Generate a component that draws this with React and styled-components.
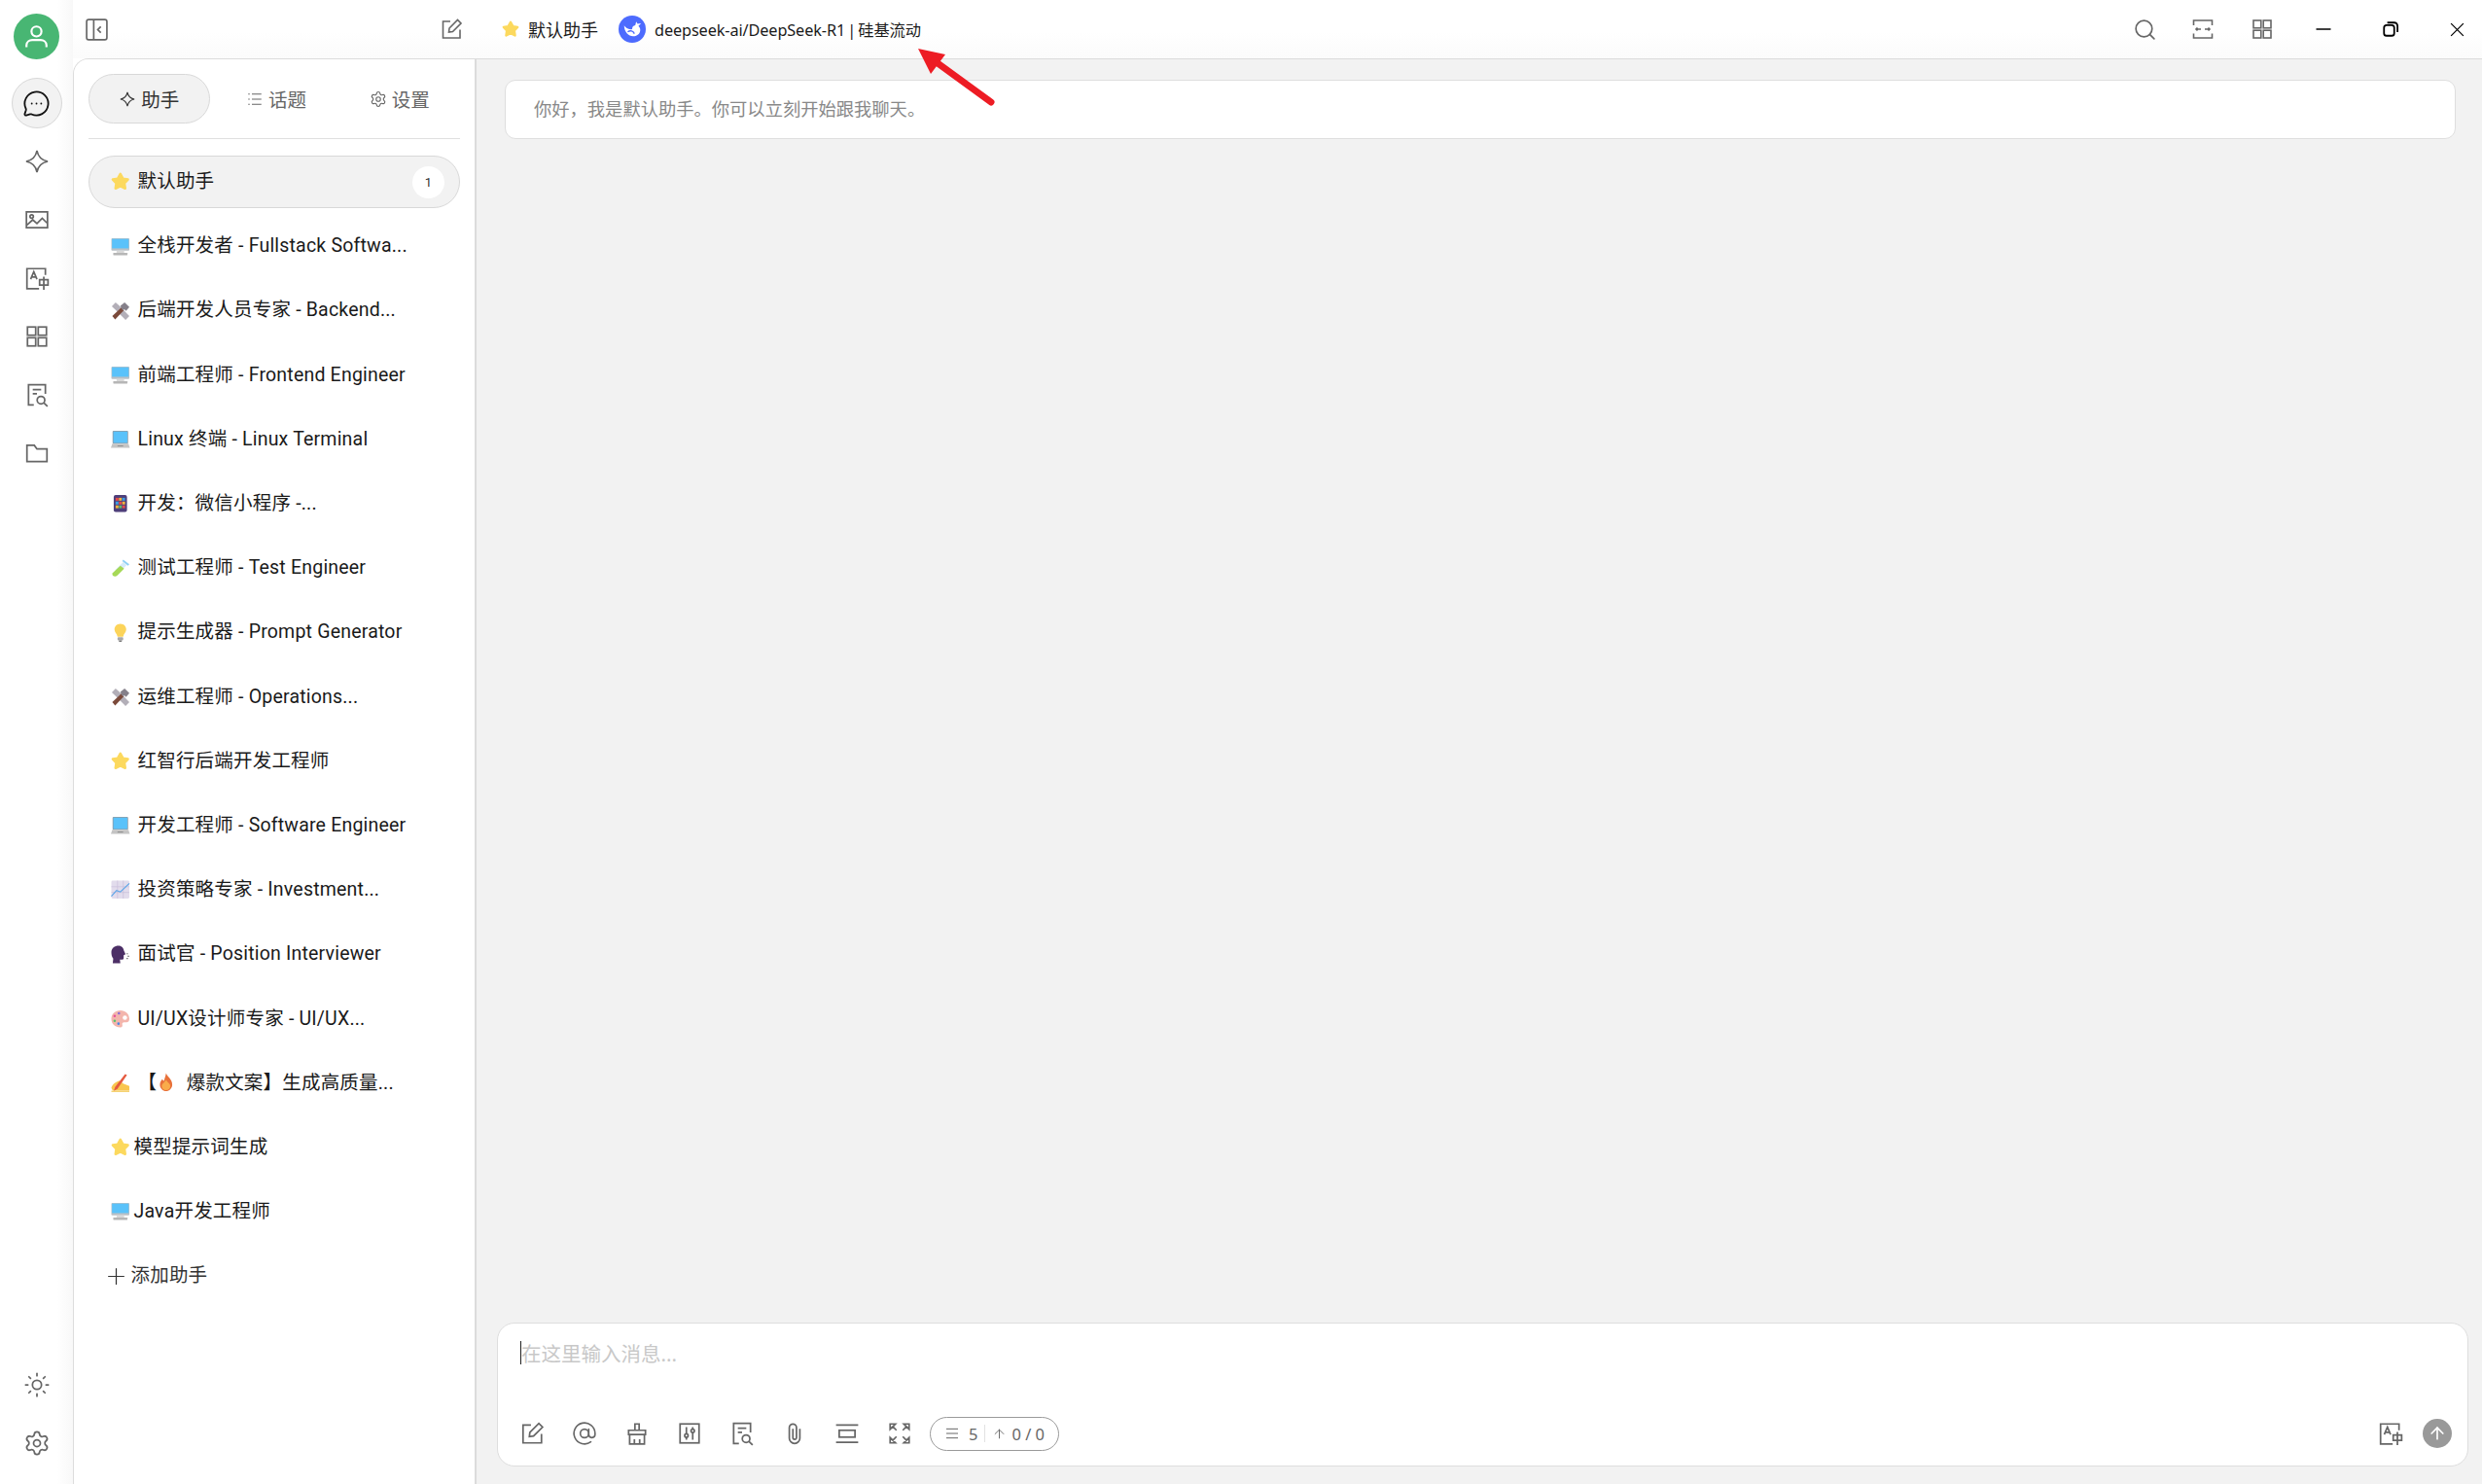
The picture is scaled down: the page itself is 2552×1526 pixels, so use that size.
import styled, { createGlobalStyle } from "styled-components"
import { ArrowUp, AtSign, MessageCircleMore, Plus, Search, Settings, Sun } from "lucide-react"

const GlobalStyle = createGlobalStyle`
    html, body {
        margin: 0;
        height: 100%;
        background: #fff;
        overflow: hidden;
    }
    body {
        font-family: "Noto Sans", "Noto Sans CJK SC", sans-serif;
        color: #1a1a1a;
    }
    * {
        box-sizing: border-box;
    }
`

const Layout = styled.div`
    display: flex;
    height: 100vh;
    position: relative;
`
const Sidebar = styled.aside`
    width: 75px;
    flex-shrink: 0;
    display: flex;
    flex-direction: column;
    align-items: center;
    padding: 14px 0 16px;
    background: linear-gradient(90deg, #fff 78%, #f8f8f8);
`
const Avatar = styled.div`
    width: 47px;
    height: 47px;
    border-radius: 50%;
    background: #48b673;
    color: #fff;
    display: flex;
    align-items: center;
    justify-content: center;
    margin-bottom: 19px;
`
const SideGroup = styled.div`
    display: flex;
    flex-direction: column;
    align-items: center;
    gap: 8px;
    &:last-child {
        margin-top: auto;
    }
`
const SideButton = styled.div`
    width: 52px;
    height: 52px;
    border-radius: 50%;
    display: flex;
    align-items: center;
    justify-content: center;
    color: ${(p) => (p.$active ? "#111" : "#666")};
    background: ${(p) => (p.$active ? "#f2f2f2" : "transparent")};
    border: 1.5px solid ${(p) => (p.$active ? "#d8d8d8" : "transparent")};
`
const Column = styled.div`
    flex: 1;
    min-width: 0;
    display: flex;
    flex-direction: column;
`
const Navbar = styled.header`
    height: 60px;
    flex-shrink: 0;
    display: flex;
    align-items: center;
    background: linear-gradient(#fff 55%, #fbfbfb);
`
const NavLeft = styled.div`
    width: 414px;
    flex-shrink: 0;
    display: flex;
    align-items: center;
    justify-content: space-between;
    padding: 0 13px 0 12px;
    color: #666;
`
const NavTitle = styled.div`
    display: flex;
    align-items: center;
    gap: 9px;
    font-size: 18px;
    padding-left: 27px;
`
const ModelName = styled.span`
    margin-left: 12px;
    font-size: 16.25px;
    letter-spacing: -0.1px;
    word-spacing: -2px;
    display: flex;
    align-items: center;
    gap: 9px;
`
const ModelLogo = styled.span`
    width: 28px;
    height: 28px;
    border-radius: 50%;
    background: #4d6bfe;
    display: flex;
    align-items: center;
    justify-content: center;
`
const NavRight = styled.div`
    margin-left: auto;
    display: flex;
    align-items: center;
    height: 100%;
`
const NavIcon = styled.div`
    width: ${(p) => p.$w || 60}px;
    height: 100%;
    padding-left: ${(p) => p.$pad || 0}px;
    display: flex;
    align-items: center;
    justify-content: center;
    color: #666;
`
const WinButton = styled.div`
    width: 69px;
    height: 100%;
    display: flex;
    align-items: center;
    justify-content: center;
    color: #000;
    &:last-child {
        width: 60px;
        justify-content: flex-end;
        padding-right: 17px;
    }
`
const Body = styled.div`
    flex: 1;
    min-height: 0;
    display: flex;
    border-top: 1.5px solid #dcdcdc;
    border-left: 1.5px solid #dcdcdc;
    border-top-left-radius: 16px;
    overflow: hidden;
    background: #f2f2f2;
`
const Panel = styled.section`
    width: 414px;
    flex-shrink: 0;
    background: #fff;
    border-right: 2px solid #dcdcdc;
    padding: 15px 15px 0 15px;
    font-family: Roboto, "Noto Sans CJK SC", sans-serif;
`
const Tabs = styled.div`
    display: flex;
    gap: 2px;
    padding-bottom: 15px;
    border-bottom: 1.5px solid #e0e0e0;
    margin-bottom: 17px;
`
const Tab = styled.div`
    width: 125px;
    height: 51px;
    border-radius: 26px;
    display: flex;
    align-items: center;
    justify-content: center;
    gap: 5px;
    font-size: 19.5px;
    color: ${(p) => (p.$active ? "#333" : "#666")};
    background: ${(p) => (p.$active ? "#f2f2f2" : "transparent")};
    border: 1.5px solid ${(p) => (p.$active ? "#d8d8d8" : "transparent")};
    margin-right: ${(p) => (p.$active ? 4 : 0)}px;
`
const List = styled.div`
    display: flex;
    flex-direction: column;
    gap: 12px;
`
const Row = styled.div`
    height: 54.2px;
    border-radius: 27px;
    display: flex;
    align-items: center;
    gap: ${(p) => (p.$tight ? 4 : 8)}px;
    padding: 0 15px 0 22px;
    font-size: 19.5px;
    letter-spacing: 0.2px;
    white-space: nowrap;
    background: ${(p) => (p.$active ? "#f2f2f2" : "transparent")};
    border: 1.5px solid ${(p) => (p.$active ? "#d8d8d8" : "transparent")};
`
const AddRow = styled(Row)`
    padding-left: 14px;
    gap: 1.5px;
    color: #333;
`
const Label = styled.span`
    margin-bottom: 5px;
`
const Badge = styled.span`
    margin-left: auto;
    width: 33px;
    height: 33px;
    border-radius: 50%;
    background: #fff;
    display: flex;
    align-items: center;
    justify-content: center;
    font-size: 13px;
    color: #333;
`
const Main = styled.main`
    flex: 1;
    min-width: 0;
    display: flex;
    flex-direction: column;
    justify-content: space-between;
    padding: 21px 14px 18px 21px;
`
const Greeting = styled.div`
    height: 61px;
    margin: 0 13px 0 8px;
    padding: 0 29px 3px;
    display: flex;
    align-items: center;
    background: #fff;
    border: 1.5px solid #dedede;
    border-radius: 11px;
    font-size: 18.3px;
    color: #888;
`
const InputBox = styled.div`
    height: 148px;
    display: flex;
    flex-direction: column;
    padding: 18px 16px 15px 8px;
    background: #fff;
    border: 1.5px solid #dedede;
    border-radius: 18px;
`
const Placeholder = styled.div`
    height: 24px;
    margin-left: 15px;
    display: flex;
    align-items: center;
    border-left: 1px solid #222;
    font-size: 20.5px;
    color: #c8c8c8;
`
const Toolbar = styled.div`
    margin-top: auto;
    height: 36px;
    display: flex;
    align-items: center;
`
const ToolButton = styled.div`
    width: 54px;
    height: 36px;
    display: flex;
    align-items: center;
    justify-content: center;
    color: #666;
`
const Counter = styled.div`
    margin-left: 4px;
    width: 133px;
    height: 35px;
    border: 1.5px solid #9a9a9a;
    border-radius: 18px;
    display: flex;
    align-items: center;
    padding-left: 14px;
    font-size: 16.5px;
    color: #666;
`
const CounterPart = styled.span`
    display: flex;
    align-items: center;
    gap: ${(p) => p.$gap}px;
`
const CounterLine = styled.i`
    width: 1px;
    height: 18px;
    background: #e2e2e2;
    margin: 0 7px;
`
const ToolRight = styled.div`
    margin-left: auto;
    display: flex;
    align-items: center;
    gap: 20px;
    color: #666;
`
const SendButton = styled.div`
    width: 30px;
    height: 30px;
    border-radius: 50%;
    background: #999;
    color: #fff;
    display: flex;
    align-items: center;
    justify-content: center;
`
const Annotation = styled.svg`
    position: absolute;
    left: 940px;
    top: 46px;
    width: 85px;
    height: 65px;
`
const Glyph = styled.svg.attrs({ viewBox: "0 0 24 24", fill: "none", stroke: "currentColor" })`
    display: block;
    flex-shrink: 0;
    width: ${(p) => p.$size || 24}px;
    height: ${(p) => p.$size || 24}px;
    stroke-width: ${(p) => p.$weight || 1.6};
`
const EmojiBox = styled.svg.attrs({ viewBox: "0 0 20 20" })`
    display: inline-block;
    flex-shrink: 0;
    width: ${(p) => p.$size || 19.5}px;
    height: ${(p) => p.$size || 19.5}px;
    vertical-align: -3px;
    margin: ${(p) => p.$margin || 0};
`

const icons = {
    sparkle: <path d="M12 2.5C13 8 16 11 21.5 12C16 13 13 16 12 21.5C11 16 8 13 2.5 12C8 11 11 8 12 2.5Z" />,
    image: (
        <>
            <rect x="2" y="4.5" width="20" height="15" />
            <circle cx="7" cy="8.8" r="1.6" />
            <path d="M2.5 17L8 12L12 15.5L17 10.5L21.5 15" />
        </>
    ),
    translate: <path d="M20 9V3H2.5V22H14M6 13L9 6L12 13M7 11H11M14.5 13.5H22.5V18.5H14.5ZM18.5 10.5V23" />,
    grid: (
        <>
            <rect x="3" y="3" width="7.8" height="7.8" />
            <rect x="13.2" y="3" width="7.8" height="7.8" />
            <rect x="3" y="13.2" width="7.8" height="7.8" />
            <rect x="13.2" y="13.2" width="7.8" height="7.8" />
        </>
    ),
    docSearch: (
        <>
            <path d="M20 11V2.5H4V21.5H9M8 7H16M8 11H12" />
            <circle cx="15.8" cy="17" r="3.6" />
            <path d="M18.4 19.6L22 23" />
        </>
    ),
    folder: <path d="M2.5 4.5H9.5L12 8H21.5V20H2.5Z" />,
    edit: <path d="M11 4H3.5V21H21V12.5M9.5 15L10 11L18.5 2.5L22 6L13.5 14.5Z" />,
    collapse: (
        <>
            <rect x="2" y="2" width="20" height="20" rx="2" />
            <path d="M9 2V22M16 9L13 12L16 15" />
        </>
    ),
    brush: <path d="M10 9V3H14V9M4 9H20V13H4ZM5 13V22H19V13M9.5 22V17.5M14.5 22V17.5" />,
    sliders: (
        <>
            <rect x="3" y="3" width="18" height="18" />
            <path d="M9 6V18M15 6V18" />
            <circle cx="9" cy="14" r="1.6" fill="#fff" />
            <circle cx="15" cy="9.5" r="1.6" fill="#fff" />
        </>
    ),
    clip: <path d="M17 7.5V16.5A5 5 0 0 1 7 16.5V6.5A3.4 3.4 0 0 1 13.8 6.5V16A1.7 1.7 0 0 1 10.4 16V7.5" />,
    rows: (
        <>
            <path d="M1.5 4H22.5M1.5 20.5H22.5" />
            <rect x="4.5" y="9" width="15" height="6.5" />
        </>
    ),
    fullscreen: <path d="M3 3H8L3 8ZM21 3H16L21 8ZM3 21H8L3 16ZM21 21H16L21 16ZM5 5L9 9M19 5L15 9M5 19L9 15M19 19L15 15" />,
    expand: <path d="M2.5 8V3H21.5V8M2.5 16.5V21H21.5V16.5M5 12H10M6.5 10.5L5 12L6.5 13.5M14 12H19M17.5 10.5L19 12L17.5 13.5" />,
    minimize: <path d="M2 12H22" />,
    restore: (
        <>
            <rect x="3" y="6.5" width="14" height="14.5" rx="3.5" />
            <path d="M7.5 3H17A4.5 4.5 0 0 1 21.5 7.5V16" />
        </>
    ),
    close: <path d="M3 3L21 21M21 3L3 21" />,
    menu: <path d="M3 5H21M3 12H21M3 19H21" />,
    list: <path d="M3 5H5M8 5H21M3 12H5M8 12H21M3 19H5M8 19H21" />,
    user: <path d="M12 3.5A4.2 4.2 0 1 1 12 12A4.2 4.2 0 1 1 12 3.5ZM3.5 21V19.5C3.5 16.5 6 15 8.5 15H15.5C18 15 20.5 16.5 20.5 19.5V21" />,
}

function Icon({ name, size, weight }) {
    return <Glyph $size={size} $weight={weight}>{icons[name]}</Glyph>
}

const emoji = {
    star: <path d="M10 2L12.7 6.8L18 7.7L14.3 11.6L15.1 17.2L10 14.7L4.9 17.2L5.7 11.6L2 7.7L7.3 6.8Z" fill="#fcd95e" stroke="#fcd95e" strokeWidth="2.6" strokeLinejoin="round" />,
    desktop: (
        <>
            <rect x="0.5" y="1" width="19" height="13" rx="1" fill="#b9c0c6" />
            <rect x="1.2" y="1.7" width="17.6" height="10" fill="#5ac2fa" />
            <rect x="6" y="14" width="8" height="2.5" fill="#d8d8d8" />
            <rect x="2.5" y="16.5" width="15" height="2.5" rx="0.5" fill="#b6b6b6" />
        </>
    ),
    laptop: (
        <>
            <rect x="1.8" y="1" width="16.4" height="13.5" rx="1" fill="#8f9aa3" />
            <rect x="2.6" y="1.8" width="14.8" height="12" fill="#5ac2fa" />
            <path d="M1.5 14.5H18.5L20 19H0Z" fill="#c4c4c4" />
            <rect x="7" y="16.5" width="6" height="1" fill="#8e8e8e" />
        </>
    ),
    tools: (
        <>
            <path d="M1 5L5 1L8.5 4L19.5 15.5L15.5 19.5L4.5 8.5Z" fill="#b3afb8" />
            <path d="M1.5 15.5L11 6.5L13.5 9.5L4.5 19Z" fill="#7b4a3a" />
            <path d="M10 4.500L14.500 1L19.500 6L16 10L14.500 8.500L12 9Z" fill="#85808a" />
        </>
    ),
    tablet: (
        <>
            <rect x="3" y="1" width="14" height="18" rx="2" fill="#4e3f7a" />
            <rect x="5" y="4" width="3" height="3" fill="#e64a4a" />
            <rect x="8.5" y="4" width="3" height="3" fill="#f4b63a" />
            <rect x="12" y="4" width="3" height="3" fill="#3aa0e6" />
            <rect x="5" y="8" width="3" height="3" fill="#3aa0e6" />
            <rect x="8.5" y="8" width="3" height="3" fill="#e64a4a" />
            <rect x="12" y="8" width="3" height="3" fill="#f4b63a" />
            <rect x="5" y="12" width="3" height="3" fill="#f4b63a" />
            <rect x="8.5" y="12" width="3" height="3" fill="#5cc06a" />
            <rect x="12" y="12" width="3" height="3" fill="#e64a4a" />
        </>
    ),
    tube: (
        <>
            <path d="M13 4L16.5 7.5L8 16L4.5 12.5Z" fill="#d6ecfa" />
            <path d="M10 8L14 11L6.5 18.5C5 20 1 19.5 1.5 16Z" fill="#a6d957" />
            <path d="M13 1.5L19.5 6.5L18 8L12 3Z" fill="#8fd0f5" />
        </>
    ),
    bulb: (
        <>
            <path d="M10 0.5C6 0.5 3.8 3.5 3.8 6.5C3.8 9.5 6.5 11 7 14H13C13.5 11 16.2 9.5 16.2 6.5C16.2 3.5 14 0.5 10 0.5Z" fill="#fcd45a" />
            <rect x="7" y="14.5" width="6" height="3.5" rx="1" fill="#a9a9a9" />
            <rect x="8.5" y="18" width="3" height="1.5" fill="#777" />
        </>
    ),
    chart: (
        <>
            <rect x="0.5" y="0.5" width="19" height="19" rx="1.5" fill="#e2dcec" />
            <path d="M7 0.5V19.5M13 0.5V19.5M0.5 7H19.5M0.5 13H19.5" stroke="#c8bed8" strokeWidth="0.7" />
            <path d="M0.5 17L6 11L10 12.5L19.5 3.5" fill="none" stroke="#5aa5e8" strokeWidth="1.2" />
        </>
    ),
    speak: (
        <>
            <path d="M0.5 7.5C0.5 3 4 0.5 8 0.5C11.5 0.5 13.5 3 13.8 6L15.5 9.5L13.5 10.5L13.5 13.5C13.5 15 12 15.5 9.5 15L10 19H2L2.5 14C1 12.5 0.5 10 0.5 7.5Z" fill="#4c2f66" />
            <path d="M16.5 9H18M17.5 11.5H19.5M16.5 14H18" stroke="#777" strokeWidth="1.2" />
        </>
    ),
    palette: (
        <>
            <path d="M10 1C4.5 1 0.5 5 0.5 10C0.5 15 4.5 19 10 19C12 19 12.5 17.5 12 16C11.5 14.5 12.5 13.5 14 13.5H16.5C18.5 13.5 19.5 12 19.5 10C19.5 5 15.5 1 10 1Z" fill="#f3b5ac" />
            <circle cx="14.8" cy="8.8" r="2.3" fill="#fff" />
            <circle cx="8.5" cy="4" r="1.3" fill="#8a6bd8" />
            <circle cx="4" cy="7" r="1.3" fill="#e8509a" />
            <circle cx="4" cy="12" r="1.3" fill="#58c46a" />
            <circle cx="8" cy="15" r="1.3" fill="#4a86e8" />
        </>
    ),
    hand: (
        <>
            <path d="M0.5 15C1.5 11 6 8.5 9 7.5L13 10.5L19.5 13V18H2Z" fill="#f9c64f" />
            <path d="M15 0.5L17 1.5L7 16L3 18.5L4.5 14Z" fill="#e5593f" />
            <path d="M0.5 18H19.5V19.5H0.5Z" fill="#f5d272" />
        </>
    ),
    fire: (
        <>
            <path d="M10 0.5C11 4 16.5 7 16.5 12.5C16.5 16.5 13.5 19.5 10 19.5C6.5 19.5 3.5 16.5 3.5 12.5C3.5 10 5 8.5 6 7L7.5 9C8.5 6.5 9.5 3.5 10 0.5Z" fill="#e8713a" />
            <path d="M10 7.5C11 10 14.5 11.5 14.5 14C14.5 16.8 12.5 18.5 10 18.5C7.5 18.5 5.5 16.8 5.5 14C5.5 12 8.5 10.5 10 7.5Z" fill="#f9ab4a" />
        </>
    ),
}

function Emoji({ name, size, margin }) {
    return <EmojiBox $size={size} $margin={margin}>{emoji[name]}</EmojiBox>
}

const assistants = [
    { icon: "desktop", name: "全栈开发者 - Fullstack Softwa..." },
    { icon: "tools", name: "后端开发人员专家 - Backend..." },
    { icon: "desktop", name: "前端工程师 - Frontend Engineer" },
    { icon: "laptop", name: "Linux 终端 - Linux Terminal" },
    { icon: "tablet", name: "开发：微信小程序 -..." },
    { icon: "tube", name: "测试工程师 - Test Engineer" },
    { icon: "bulb", name: "提示生成器 - Prompt Generator" },
    { icon: "tools", name: "运维工程师 - Operations..." },
    { icon: "star", name: "红智行后端开发工程师" },
    { icon: "laptop", name: "开发工程师 - Software Engineer" },
    { icon: "chart", name: "投资策略专家 - Investment..." },
    { icon: "speak", name: "面试官 - Position Interviewer" },
    { icon: "palette", name: "UI/UX设计师专家 - UI/UX..." },
]

const topIcons = ["docSearch", "folder"]
const toolIcons = ["edit", "at", "brush", "sliders", "docSearch", "clip", "rows", "fullscreen"]

function App() {
    return (
        <Layout>
            <GlobalStyle />
            <Sidebar>
                <Avatar><Icon name="user" size={29} weight={1.8} /></Avatar>
                <SideGroup>
                    <SideButton $active><MessageCircleMore size={29} strokeWidth={1.5} /></SideButton>
                    <SideButton><Icon name="sparkle" size={28} weight={1.4} /></SideButton>
                    <SideButton><Icon name="image" size={26} /></SideButton>
                    <SideButton><Icon name="translate" size={26} /></SideButton>
                    <SideButton><Icon name="grid" size={26} /></SideButton>
                    {topIcons.map((name) => (
                        <SideButton key={name}><Icon name={name} size={26} /></SideButton>
                    ))}
                </SideGroup>
                <SideGroup>
                    <SideButton><Sun size={28} strokeWidth={1.5} /></SideButton>
                    <SideButton><Settings size={28} strokeWidth={1.5} /></SideButton>
                </SideGroup>
            </Sidebar>
            <Column>
                <Navbar>
                    <NavLeft>
                        <Icon name="collapse" size={25} />
                        <Icon name="edit" size={24} />
                    </NavLeft>
                    <NavTitle>
                        <Emoji name="star" size={18} />
                        <span>默认助手</span>
                        <ModelName>
                            <ModelLogo>
                                <svg width="22" height="22" viewBox="0 0 24 24">
                                    <path d="M3 8C3 15 8 20 13 20C18 20 21.5 16.5 21 12C20.8 10.5 20 9.5 19 8.5L22 5.5L18 6L16.5 3.5L15.5 7.5C13 8 12 9.5 12 12C8.5 13 5 11 3 8Z" fill="#fff" />
                                    <path d="M7 15C10 13 13 14 14.5 17" fill="none" stroke="#4d6bfe" strokeWidth="1.5" />
                                </svg>
                            </ModelLogo>
                            deepseek-ai/DeepSeek-R1 | 硅基流动
                        </ModelName>
                    </NavTitle>
                    <NavRight>
                        <NavIcon><Search size={25} strokeWidth={1.6} /></NavIcon>
                        <NavIcon><Icon name="expand" size={24} /></NavIcon>
                        <NavIcon $w={59} $pad={3}><Icon name="grid" size={24} /></NavIcon>
                        <WinButton><Icon name="minimize" size={18} weight={2} /></WinButton>
                        <WinButton><Icon name="restore" size={18} weight={2.4} /></WinButton>
                        <WinButton><Icon name="close" size={17} weight={1.8} /></WinButton>
                    </NavRight>
                </Navbar>
                <Body>
                    <Panel>
                        <Tabs>
                            <Tab $active><Icon name="sparkle" size={18} weight={1.5} />助手</Tab>
                            <Tab><Icon name="list" size={18} weight={1.4} />话题</Tab>
                            <Tab><Settings size={18} strokeWidth={1.5} />设置</Tab>
                        </Tabs>
                        <List>
                            <Row $active>
                                <Emoji name="star" />
                                <Label>默认助手</Label>
                                <Badge>1</Badge>
                            </Row>
                            {assistants.map((item) => (
                                <Row key={item.name}>
                                    <Emoji name={item.icon} />
                                    <Label>{item.name}</Label>
                                </Row>
                            ))}
                            <Row>
                                <Emoji name="hand" />
                                <Label>【<Emoji name="fire" margin="0 6px 0 0" /> 爆款文案】生成高质量...</Label>
                            </Row>
                            <Row $tight>
                                <Emoji name="star" />
                                <Label>模型提示词生成</Label>
                            </Row>
                            <Row $tight>
                                <Emoji name="desktop" />
                                <Label>Java开发工程师</Label>
                            </Row>
                            <AddRow>
                                <Plus size={27} strokeWidth={1.1} />
                                <Label>添加助手</Label>
                            </AddRow>
                        </List>
                    </Panel>
                    <Main>
                        <Greeting>你好，我是默认助手。你可以立刻开始跟我聊天。</Greeting>
                        <InputBox>
                            <Placeholder>在这里输入消息...</Placeholder>
                            <Toolbar>
                                {toolIcons.map((name) => (
                                    <ToolButton key={name}>
                                        {name === "at" ? <AtSign size={26} strokeWidth={1.5} /> : <Icon name={name} size={26} />}
                                    </ToolButton>
                                ))}
                                <Counter>
                                    <CounterPart $gap={9}><Icon name="menu" size={16} weight={1.5} />5</CounterPart>
                                    <CounterLine />
                                    <CounterPart $gap={5}><ArrowUp size={15} strokeWidth={1.5} />0 / 0</CounterPart>
                                </Counter>
                                <ToolRight>
                                    <Icon name="translate" size={26} />
                                    <SendButton><ArrowUp size={20} strokeWidth={2} /></SendButton>
                                </ToolRight>
                            </Toolbar>
                        </InputBox>
                    </Main>
                </Body>
            </Column>
            <Annotation viewBox="0 0 85 65">
                <path d="M4 4L32 10L17 30Z" fill="#ed1c24" />
                <path d="M20 16L79 59" stroke="#ed1c24" strokeWidth="7" strokeLinecap="round" />
            </Annotation>
        </Layout>
    )
}

export default App
